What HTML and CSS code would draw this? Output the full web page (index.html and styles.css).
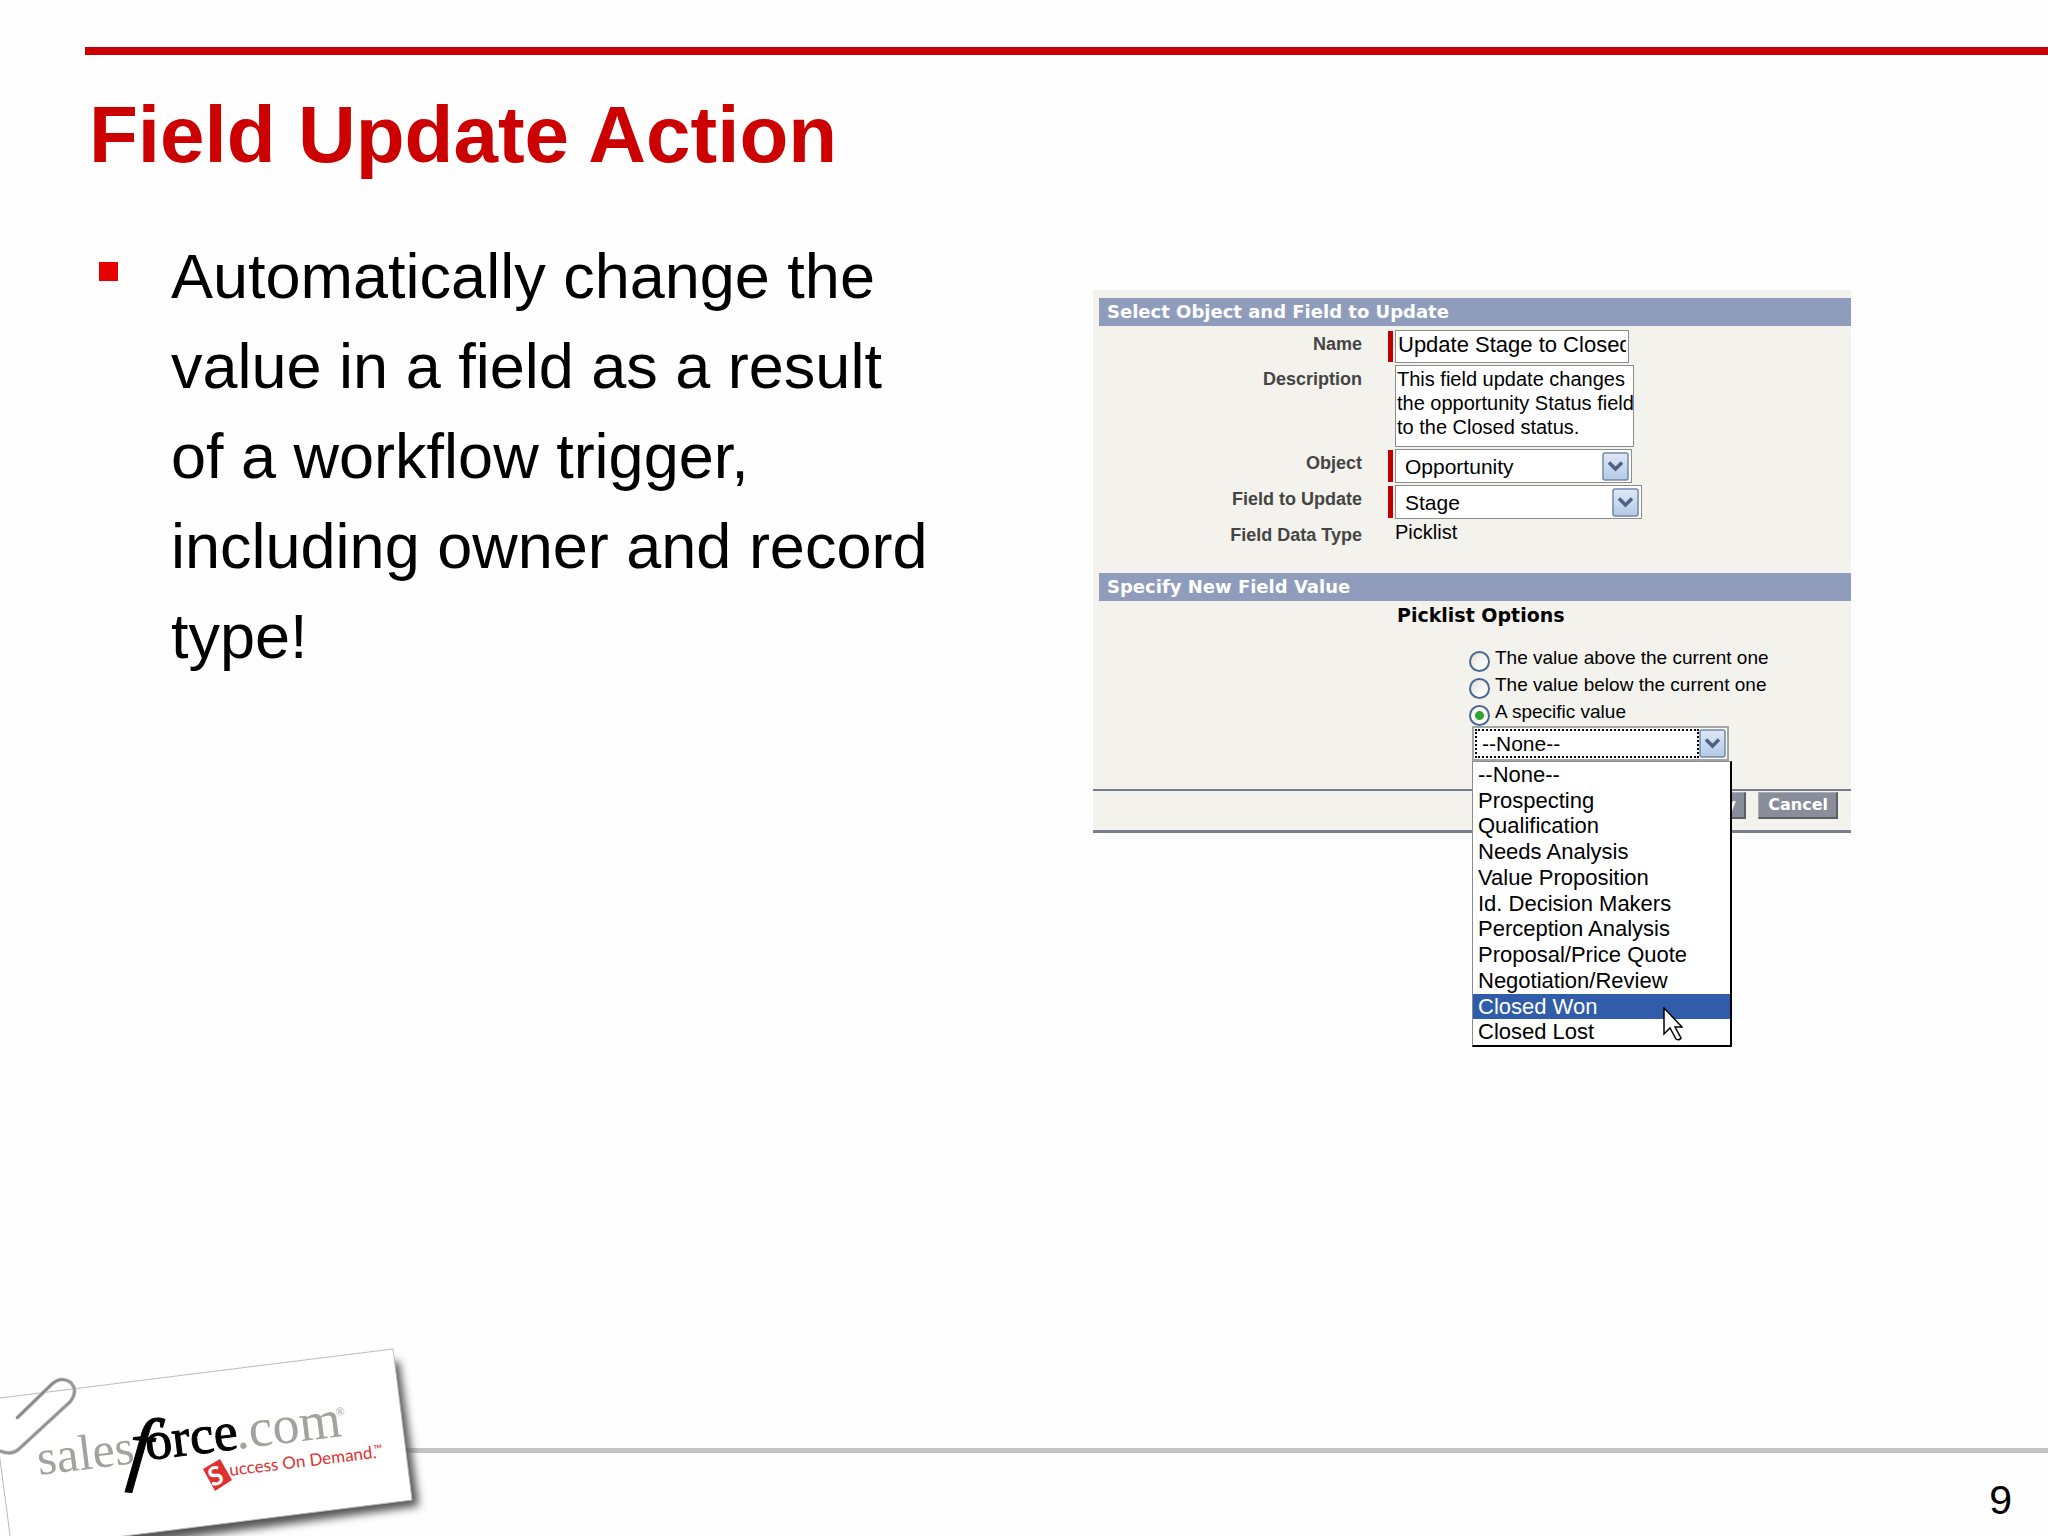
FILE: index.html
```html
<!DOCTYPE html>
<html lang="en">
<head>
  <meta charset="UTF-8" />
  <title>Field Update Action</title>
  <link rel="stylesheet" href="styles.css">
</head>
<body>
  <div class="slide">
    <header class="slide-header">
      <div class="rule"></div>
      <h1>Field Update Action</h1>
    </header>

    <main class="content">
      <ul class="points">
        <li>Automatically change the value in a field as a result of a workflow trigger, including owner and record type!</li>
      </ul>

      <form class="panel">
        <h2 class="band">Select Object and Field to Update</h2>
        <div class="fields">
          <label for="name">Name</label>
          <div class="value required"><input type="text" id="name" class="name" value="Update Stage to Closed"></div>

          <label for="description">Description</label>
          <div class="value"><textarea id="description">This field update changes
the opportunity Status field
to the Closed status.</textarea></div>

          <label for="object">Object</label>
          <div class="value required">
            <div class="select select-object">
              <select id="object"><option>Opportunity</option></select>
              <svg class="arrow" viewBox="0 0 27 29"><use href="#arrow" /></svg>
            </div>
          </div>

          <label for="field">Field to Update</label>
          <div class="value required">
            <div class="select select-field">
              <select id="field"><option>Stage</option></select>
              <svg class="arrow" viewBox="0 0 27 29"><use href="#arrow" /></svg>
            </div>
          </div>

          <span class="label">Field Data Type</span>
          <div class="value"><span class="plain">Picklist</span></div>
        </div>

        <h2 class="band">Specify New Field Value</h2>
        <div class="options">
          <h3>Picklist Options</h3>
          <div class="choices">
            <label class="radio"><input type="radio" name="option"><span>The value above the current one</span></label>
            <label class="radio"><input type="radio" name="option"><span>The value below the current one</span></label>
            <label class="radio"><input type="radio" name="option" checked><span>A specific value</span></label>
            <div class="picker">
              <div class="select select-value">
                <select aria-label="Specific value"><option>--None--</option></select>
                <svg class="arrow" viewBox="0 0 27 29"><use href="#arrow" /></svg>
              </div>
              <ul class="menu" role="listbox">
                <li role="option">--None--</li>
                <li role="option">Prospecting</li>
                <li role="option">Qualification</li>
                <li role="option">Needs Analysis</li>
                <li role="option">Value Proposition</li>
                <li role="option">Id. Decision Makers</li>
                <li role="option">Perception Analysis</li>
                <li role="option">Proposal/Price Quote</li>
                <li role="option">Negotiation/Review</li>
                <li role="option" class="active" aria-selected="true">Closed Won</li>
                <li role="option">Closed Lost</li>
              </ul>
              <svg class="cursor" viewBox="0 0 20 34">
                <path d="M1 1v26l6-6 6 11q3 2 5-1l-6-11h7z" fill="#fff" stroke="#000" stroke-width="1.5" />
              </svg>
            </div>
          </div>
        </div>

        <div class="buttons">
          <button type="button">Apply</button>
          <button type="button">Cancel</button>
        </div>
      </form>
    </main>

    <footer class="slide-footer">
      <div class="footer-line"></div>
      <p class="page-number">9</p>
      <svg class="logo" viewBox="0 0 440 206" role="img" aria-label="salesforce.com">
        <defs>
          <filter id="soft" x="-10%" y="-10%" width="120%" height="130%"><feGaussianBlur stdDeviation="4" /></filter>
          <linearGradient id="wire" x1="0" y1="0" x2="1" y2="1">
            <stop offset="0" stop-color="#555" />
            <stop offset="0.5" stop-color="#999" />
            <stop offset="1" stop-color="#777" />
          </linearGradient>
        </defs>
        <!-- card -->
        <path d="M60 90L399 31L419 176L60 225z" fill="#555" filter="url(#soft)" />
        <path d="M-8 69L393 19L412 170L12 220z" fill="#fff" stroke="#bbb" stroke-width="1" />
        <!-- paper clip -->
        <path d="M17 88L52 54Q61 46 70 52Q79 60 70 72L20 118Q12 126 0 121" fill="none" stroke="#ccc" stroke-width="4" />
        <path d="M17 88L52 54Q61 46 70 52Q79 60 70 72L20 118Q12 126 0 121" fill="none" stroke="url(#wire)" stroke-width="2.5" stroke-linecap="round" />
        <!-- name -->
        <g class="logo-name">
          <text class="gray sales" transform="translate(39 145) rotate(-7)">sales</text>
          <text class="black big-f" transform="translate(126 144) rotate(6)">f</text>
          <text class="black" transform="translate(147 130) rotate(-7)">orce</text>
          <text class="gray" transform="translate(237 119) rotate(-7)">.com</text>
          <text class="gray mark" transform="translate(336 86) rotate(-7)">®</text>
        </g>
        <!-- tagline -->
        <path d="M203 139L220 129L232 150L215 161z" fill="#e03030" />
        <g class="logo-tag">
          <text class="tag-s" transform="translate(212 157) rotate(-20)">S</text>
          <text transform="translate(230 146) rotate(-7)">uccess On Demand.</text>
          <text class="mark" transform="translate(374 124) rotate(-7)">™</text>
        </g>
      </svg>
    </footer>
  </div>

  <svg class="sprites" width="0" height="0">
    <defs>
      <linearGradient id="face" x1="0" y1="0" x2="0" y2="1">
        <stop offset="0" stop-color="#dfe9f6" />
        <stop offset="1" stop-color="#b4c9e6" />
      </linearGradient>
    </defs>
    <symbol id="arrow" viewBox="0 0 27 29">
      <rect x="1" y="1" width="25" height="27" rx="2" fill="url(#face)" stroke="#7388ab" stroke-width="1.5" />
      <path d="M7 10.500L13.500 17L20 10.500" fill="none" stroke="#4d6185" stroke-width="3.500" />
    </symbol>
  </svg>
</body>
</html>
```

FILE: styles.css
```css
* {
  box-sizing: border-box;
}
body {
  margin: 0;
  font-family: "Liberation Sans", Arial, sans-serif;
  background: #fefefe;
  color: #000;
}
h1, h2, h3, p, ul {
  margin: 0;
  padding: 0;
}
.slide {
  display: flex;
  flex-direction: column;
  min-height: 100vh;
  padding-top: 47px;
}

/* Header */
.rule {
  height: 8px;
  margin-left: 85px;
  background: #cc0000;
}
h1 {
  margin: 34px 89px 0;
  font-size: 80px;
  line-height: 92px;
  color: #cc0000;
}

/* Content */
.content {
  flex: 1;
  display: grid;
  grid-template-columns: 1fr 758px;
  align-items: start;
  padding: 50px 197px 0 89px;
}
.points {
  list-style: none;
  padding-right: 156px;
}
.points li {
  position: relative;
  padding-left: 82px;
  font-size: 63px;
  line-height: 90px;
}
.points li::before {
  content: "";
  position: absolute;
  left: 10px;
  top: 31px;
  width: 19px;
  height: 19px;
  background: #e60000;
}

/* Form panel */
.panel {
  margin-top: 59px;
  padding-top: 8px;
  background: #f3f2ed;
}
.band {
  margin-left: 6px;
  padding-left: 8px;
  font-family: "DejaVu Sans", Verdana, sans-serif;
  font-size: 18px;
  line-height: 28px;
  background: #8f9cbc;
  color: #fff;
}
.fields {
  display: grid;
  grid-template-columns: 269px 1fr;
  column-gap: 26px;
  row-gap: 2px;
  padding: 4px 0 26px;
}
.fields label,
.label {
  padding-top: 2px;
  font-size: 18px;
  line-height: 24px;
  font-weight: bold;
  text-align: right;
  color: #444;
}
.value {
  display: flex;
  padding-left: 7px;
}
.required {
  padding-left: 0;
}
.required::before {
  content: "";
  width: 5px;
  margin: 1px 2px 1px 0;
  background: #c00000;
}
input[type="text"],
textarea,
select {
  margin: 0;
  border: 1px solid #8c8c8c;
  border-radius: 0;
  outline: none;
  background: #fff;
  color: #000;
  font-family: inherit;
}
.name {
  width: 234px;
  height: 33px;
  padding: 0 2px 4px;
  font-size: 22px;
}
textarea {
  width: 239px;
  height: 82px;
  padding: 1px 0 0 1px;
  font-size: 20px;
  line-height: 24px;
  white-space: pre;
  overflow: hidden;
  resize: none;
}
.select {
  position: relative;
}
select {
  display: block;
  width: 100%;
  height: 34px;
  padding: 0 32px 0 9px;
  font-size: 21px;
  appearance: none;
}
.select-object {
  width: 237px;
}
.select-field {
  width: 247px;
}
.arrow {
  position: absolute;
  right: 3px;
  top: 3px;
  width: 27px;
  height: 29px;
  pointer-events: none;
}
.plain {
  font-size: 20px;
  line-height: 22px;
}

/* Picklist options */
.options {
  padding: 2px 0 28px 304px;
}
h3 {
  font-family: "DejaVu Sans", Tahoma, sans-serif;
  font-size: 19px;
  line-height: 24px;
}
.choices {
  display: flex;
  flex-direction: column;
  gap: 6px;
  padding: 24px 0 0 72px;
}
.radio {
  display: flex;
  gap: 5px;
  height: 21px;
  font-size: 19px;
  line-height: 14px;
}
.radio input {
  width: 21px;
  height: 21px;
  margin: 0;
  border: 2px solid #48698f;
  border-radius: 50%;
  background: linear-gradient(135deg, #dcdcd6, #fff 70%);
  appearance: none;
}
.radio input:checked {
  background: radial-gradient(circle, #2fa82f 0 4px, #fff 5px);
}
.picker {
  position: relative;
  margin: -6px 0 0 3px;
}
.select-value {
  width: 257px;
}
.select-value select {
  height: 35px;
  border-width: 2px;
  border-color: #a5a5a5;
  padding-left: 8px;
}
.select-value::before {
  content: "";
  position: absolute;
  left: 3px;
  top: 3px;
  bottom: 3px;
  right: 30px;
  border: 2px dotted #000;
}
.menu {
  position: absolute;
  top: 35px;
  left: 0;
  display: flex;
  flex-direction: column;
  width: 260px;
  height: 286px;
  border: 1px solid #8c8c8c;
  border-width: 1px 2px 2px 1px;
  border-right-color: #000;
  border-bottom-color: #000;
  list-style: none;
  background: #fff;
  font-size: 22px;
  line-height: 26px;
}
.menu li {
  flex: 1;
  min-height: 0;
  padding-left: 5px;
}
.menu .active {
  background: #315ca9;
  color: #fff;
}
.cursor {
  position: absolute;
  left: 191px;
  top: 281px;
  width: 20px;
  height: 34px;
}
.buttons {
  display: flex;
  justify-content: flex-end;
  align-items: flex-start;
  gap: 12px;
  height: 44px;
  padding: 1px 13px 0;
  border-top: 2px solid #777c90;
  border-bottom: 3px solid #777f8c;
}
.buttons button {
  width: 80px;
  height: 27px;
  padding: 0 8px 2px;
  border: 1px solid #a9abb5;
  border-right: 2px solid #5e6068;
  border-bottom: 2px solid #5e6068;
  background: #8a8d9a;
  color: #fff;
  font-family: "DejaVu Sans", Verdana, sans-serif;
  font-size: 16px;
  font-weight: bold;
  text-align: right;
}

/* Footer */
.slide-footer {
  position: relative;
  height: 88px;
}
.footer-line {
  height: 5px;
  background: #c3c3c3;
}
.page-number {
  padding: 24px 36px 0;
  font-size: 41px;
  line-height: 46px;
  text-align: right;
}
.logo {
  position: absolute;
  left: 0;
  bottom: 0;
  width: 440px;
  height: 206px;
}
.logo-name {
  font-family: "Liberation Serif", serif;
  font-size: 54px;
}
.logo-name .sales {
  font-size: 50px;
}
.logo-name .big-f {
  font-size: 84px;
  font-style: italic;
}
.black {
  stroke: #000;
}
.gray {
  fill: #a3a29d;
}
.logo-tag {
  font-family: Lato, sans-serif;
  font-size: 17px;
  fill: #e03030;
}
.logo-tag .tag-s {
  font-size: 26px;
  font-weight: bold;
  fill: #fff;
}
.logo-name .mark,
.logo-tag .mark {
  font-size: 12px;
}
.sprites {
  position: absolute;
}
```
